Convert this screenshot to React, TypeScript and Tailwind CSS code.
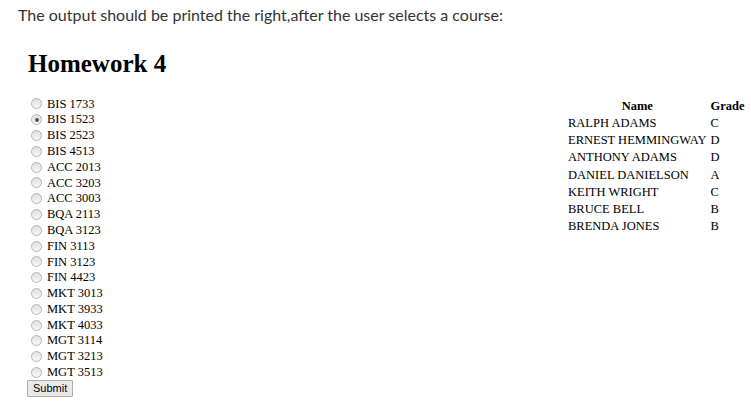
const courses = [
  "BIS 1733", "BIS 1523", "BIS 2523", "BIS 4513", "ACC 2013", "ACC 3203", "ACC 3003",
  "BQA 2113", "BQA 3123", "FIN 3113", "FIN 3123", "FIN 4423", "MKT 3013", "MKT 3933",
  "MKT 4033", "MGT 3114", "MGT 3213", "MGT 3513",
];

const grades = [
  ["RALPH ADAMS", "C"],
  ["ERNEST HEMMINGWAY", "D"],
  ["ANTHONY ADAMS", "D"],
  ["DANIEL DANIELSON", "A"],
  ["KEITH WRIGHT", "C"],
  ["BRUCE BELL", "B"],
  ["BRENDA JONES", "B"],
];

function Radio({ checked }: { checked?: boolean }) {
  return (
    <span className="w-[11px] h-[11px] rounded-full border border-[#b4b4b4] bg-gradient-to-b from-[#e0e0e0] to-[#f8f8f8] flex items-center justify-center shrink-0">
      {checked && <span className="w-[4px] h-[4px] rounded-full bg-[#555]" />}
    </span>
  );
}

export default function App() {
  return (
    <div className="w-[751px] h-[407px] bg-white overflow-hidden relative">
      <p className="pl-[18px] pt-[5px] text-[16px] leading-[20px] text-[#333]" style={{ fontFamily: "Lato, sans-serif" }}>
        The output should be printed the right,after the user selects a course:
      </p>

      <div className="flex pl-[28px] pt-[25px]" style={{ fontFamily: "'Liberation Serif', serif" }}>
        <div className="w-[540px]">
          <h1 className="text-[25px] leading-[28px] font-bold text-black">Homework 4</h1>
          <div className="mt-[18px] pl-[3px]">
            {courses.map((c, i) => (
              <label key={c} className="flex items-center gap-[5px] h-[15.8px] text-[12.5px] text-black">
                <Radio checked={i === 1} />
                <span>{c}</span>
              </label>
            ))}
          </div>
          <button
            className="block -ml-[1px] h-[17px] px-[5px] border border-[#adadad] bg-[#e9e9e9] rounded-[1px] text-[11px] leading-[15px] text-black"
            style={{ fontFamily: "Arial, 'Liberation Sans', sans-serif" }}
          >
            Submit
          </button>
        </div>

        <table className="mt-[47px] h-fit text-[12.5px] leading-[14px] text-black border-separate border-spacing-0">
          <thead>
            <tr className="h-[17px]">
              <th className="font-bold text-center py-0 pl-0 pr-[4px]">Name</th>
              <th className="font-bold text-left p-0">Grade</th>
            </tr>
          </thead>
          <tbody>
            {grades.map(([n, g]) => (
              <tr key={n} className="h-[17.3px]">
                <td className="py-0 pl-0 pr-[4px] whitespace-nowrap">{n}</td>
                <td className="p-0">{g}</td>
              </tr>
            ))}
          </tbody>
        </table>
      </div>
    </div>
  );
}
